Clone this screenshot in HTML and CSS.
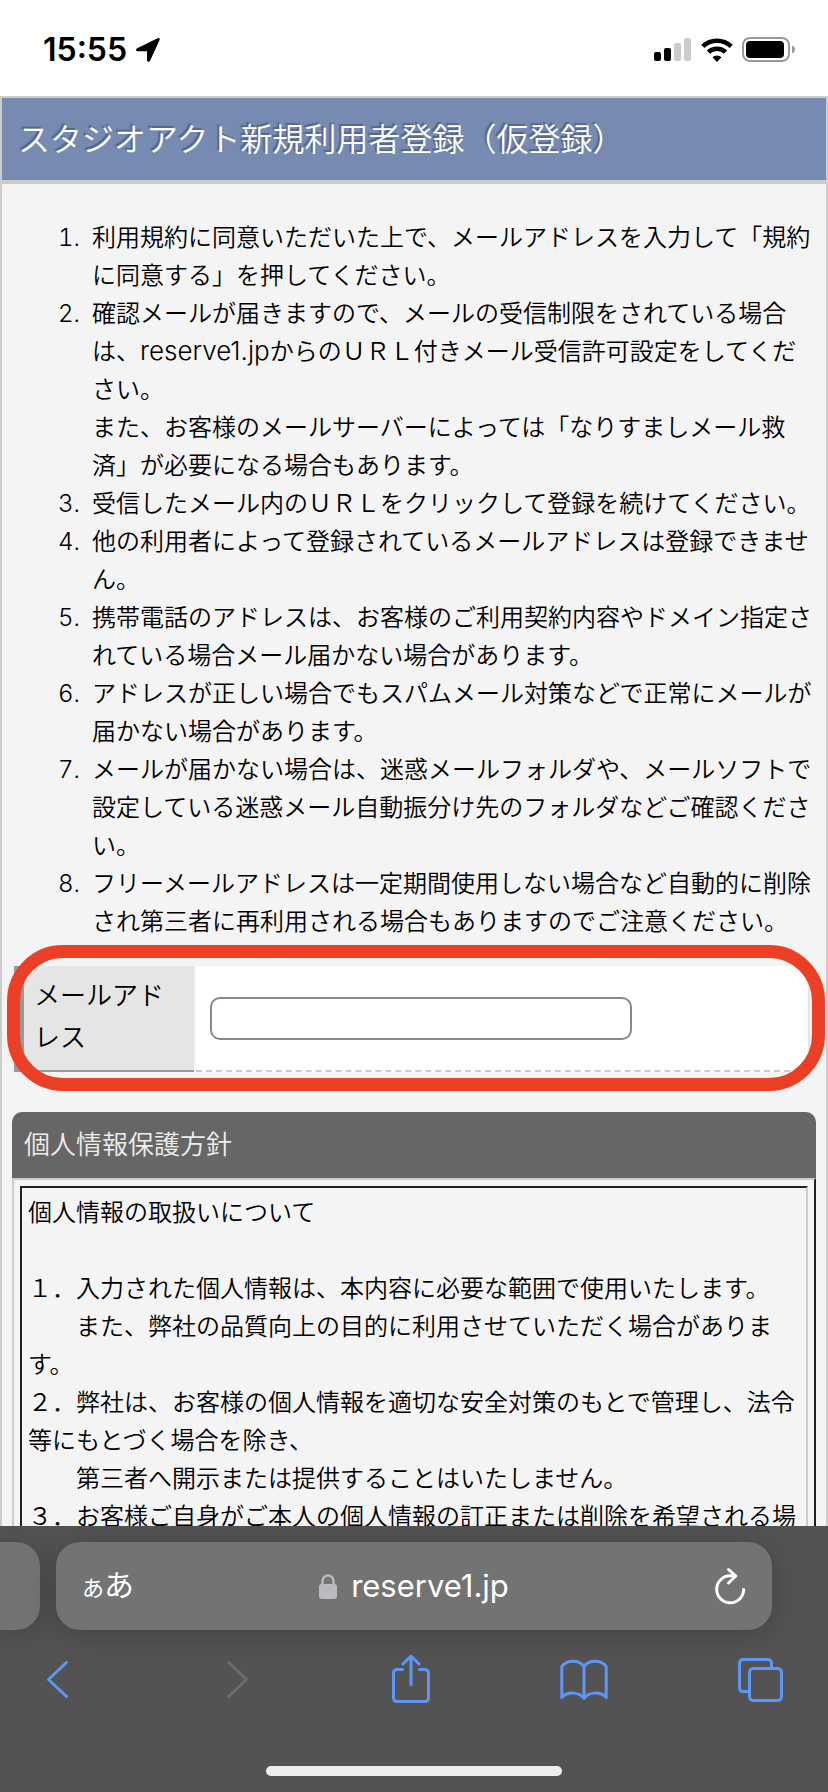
FILE: index.html
```html
<!DOCTYPE html>
<html lang="ja">
<head>
<meta charset="UTF-8" />
<meta name="viewport" content="width=device-width, initial-scale=1" />
<title>スタジオアクト新規利用者登録（仮登録）</title>
<link rel="stylesheet" href="styles.css">
</head>
<body>
<div class="status">
  <span class="time">15:55</span>
  <svg class="location" width="26" height="26" viewBox="0 0 26 26"><path d="M2.200 11.200 22.600 1.200c1.400-.7 2.600.4 2 1.800L15.200 23.600c-.9 1.900-3.200 1.400-3.200-.6V14.200H2.900C.8 14.200.3 12.100 2.200 11.200z"/></svg>
  <div class="status-icons">
    <svg width="38" height="24" viewBox="0 0 38 24">
      <rect x="0" y="14" width="7" height="9" rx="2"/>
      <rect x="10" y="10" width="7" height="13" rx="2"/>
      <g fill="#ccc"><rect x="20" y="5" width="7" height="18" rx="2"/><rect x="30" y="0" width="7" height="23" rx="2"/></g>
    </svg>
    <svg width="32" height="24" viewBox="0 0 32 24">
      <g fill="none" stroke="#000" stroke-width="4.600"><path d="M1.800 8.400a20.500 20.500 0 0 1 28.400 0"/><path d="M7.400 14.200a12.500 12.500 0 0 1 17.200 0"/></g>
      <path d="M16 24l-4.500-4.700a6.400 6.400 0 0 1 9 0z"/>
    </svg>
    <svg width="54" height="26" viewBox="0 0 54 26">
      <rect x="1" y="1" width="46" height="23" rx="7" fill="none" stroke="#999" stroke-width="2"/>
      <rect x="4" y="4" width="38" height="17" rx="4"/>
      <path d="M50 8.500c4 1.500 4 6.500 0 8z" fill="#999"/>
    </svg>
  </div>
</div>

<main class="page">
  <h1>スタジオアクト新規利用者登録（仮登録）</h1>

  <ol class="notes">
    <li>利用規約に同意いただいた上で、メールアドレスを入力して「規約に同意する」を押してください。</li>
    <li>確認メールが届きますので、メールの受信制限をされている場合は、<span class="domain">reserve1.jp</span>からのＵＲＬ付きメール受信許可設定をしてください。<br>また、お客様のメールサーバーによっては「なりすましメール救済」が必要になる場合もあります。</li>
    <li>受信したメール内のＵＲＬをクリックして登録を続けてください。</li>
    <li>他の利用者によって登録されているメールアドレスは登録できません。</li>
    <li>携帯電話のアドレスは、お客様のご利用契約内容やドメイン指定されている場合メール届かない場合があります。</li>
    <li>アドレスが正しい場合でもスパムメール対策などで正常にメールが届かない場合があります。</li>
    <li>メールが届かない場合は、迷惑メールフォルダや、メールソフトで設定している迷惑メール自動振分け先のフォルダなどご確認ください。</li>
    <li>フリーメールアドレスは一定期間使用しない場合など自動的に削除され第三者に再利用される場合もありますのでご注意ください。</li>
  </ol>

  <form class="mail">
    <label for="mail">メールアドレス</label>
    <div class="mail-value"><input type="email" id="mail" name="mail"></div>
    <div class="ring"></div>
  </form>

  <section class="policy">
    <h2>個人情報保護方針</h2>
    <div class="policy-frame">
      <div class="policy-text">個人情報の取扱いについて<br><br>１．入力された個人情報は、本内容に必要な範囲で使用いたします。<br>　　また、弊社の品質向上の目的に利用させていただく場合があります。<br>２．弊社は、お客様の個人情報を適切な安全対策のもとで管理し、法令等にもとづく場合を除き、<br>　　第三者へ開示または提供することはいたしません。<br>３．お客様ご自身がご本人の個人情報の訂正または削除を希望される場</div>
    </div>
  </section>
</main>

<footer class="browser">
  <div class="tabs">
    <div class="tab-prev"></div>
    <div class="tab">
      <button class="reader" aria-label="表示設定"><small>あ</small>あ</button>
      <a class="address" href="#">
        <svg width="18" height="25" viewBox="0 0 18 25"><rect x="0" y="10" width="18" height="15" rx="3" fill="#bbbac0"/><path d="M3.500 11V7a5.500 5.500 0 0 1 11 0v4" fill="none" stroke="#bbbac0" stroke-width="2.400"/></svg>
        reserve1.jp
      </a>
      <button class="reload" aria-label="再読み込み">
        <svg class="line" width="32" height="38" viewBox="0 0 32 38"><path d="M29.700 22.500A13.500 13.500 0 1 1 16.200 8.800h5"/><path d="M14.500 2.500l7.300 6.500-7.300 7"/></svg>
      </button>
    </div>
  </div>
  <nav>
    <button aria-label="戻る"><svg class="line" width="48" height="50" viewBox="0 0 48 50"><path d="M33.500 8.500 15.500 25.500l18 17"/></svg></button>
    <button aria-label="進む" disabled><svg class="line" width="48" height="50" viewBox="0 0 48 50"><path d="M19.500 8.500l18 17-18 17"/></svg></button>
    <button aria-label="共有"><svg class="line" width="48" height="50" viewBox="0 0 48 50"><path d="M17.500 15.500h-5q-4 0-4 4v24q0 4 4 4h27q4 0 4-4v-24q0-4-4-4h-5"/><path d="M26 30.500V2.500M18 10l8-8 8 8"/></svg></button>
    <button aria-label="ブックマーク"><svg class="line" width="48" height="50" viewBox="0 0 48 50"><path d="M24 12.500C19 5.500 7 5.500 1.800 12.500V43.500C7 37.500 19 37.500 24 44.500 29 37.500 41 37.500 46.200 43.500V12.500C41 5.500 29 5.500 24 12.500zV44"/></svg></button>
    <button aria-label="タブ一覧"><svg class="line" width="48" height="50" viewBox="0 0 48 50"><rect x="13.500" y="14.500" width="32" height="32" rx="4"/><path d="M13 37.500H7.500q-4 0-4-4v-24q0-4 4-4h24q4 0 4 4v5"/></svg></button>
  </nav>
  <div class="home-bar"></div>
</footer>
</body>
</html>
```

FILE: styles.css
```css
* { box-sizing:border-box; }
body { margin:0; height:100vh; display:flex; flex-direction:column; background:#fff; color:#000; font-family:Inter, "Noto Sans CJK JP", sans-serif; font-size:24px; line-height:38px; font-weight:350; }
button { padding:0; border:none; background:none; color:inherit; font:inherit; cursor:pointer; }
svg { display:block; }

.status { flex:none; height:96px; padding:4px 32px 0 43px; display:flex; align-items:center; }
.time { font-weight:600; font-size:32px; }
.location { margin-left:8px; }
.status-icons { margin-left:auto; display:flex; align-items:center; gap:9px; }

.page { flex:1; min-height:0; overflow:hidden; background:#f4f4f4; border:2px solid #ccc; border-bottom:none; }
h1 { margin:0; height:86px; padding:0 16px; border-bottom:4px solid #ccc; background:#778ab2; color:#fff; font-size:32px; line-height:84px; font-weight:350; text-shadow:-2px -2px 1px #55648a; }
.notes { margin:35px 14px 25px 90px; padding:0; }
.notes li::marker { content:counter(list-item) ".\2002"; }
.domain { font-size:26px; line-height:1; }

.mail { position:relative; margin:0 16px 0 12px; display:flex; gap:2px; }
.mail label { width:180px; padding:9px 12px 11px 10px; border-left:10px solid #999; border-bottom:2px solid #999; background:#e5e5e5; font-size:26px; line-height:42px; }
.mail-value { flex:1; padding:0 14px; display:flex; align-items:center; background:#fff; border-right:2px solid #e5e5e5; border-bottom:2px dashed #ccc; }
.mail input { width:422px; height:43px; padding:0 10px; border:2px solid #888; border-radius:10px; background:#fff; font:inherit; }
/* red marker around the address row */
.ring { position:absolute; inset:-21px -15px -19px -7px; border:13px solid #eb4025; border-radius:56px; pointer-events:none; }

.policy { margin:40px 10px 0; }
h2 { margin:0; padding:0 12px; background:#666; border-radius:10px 10px 0 0; color:#eee; font-size:26px; line-height:66px; font-weight:350; }
.policy-frame { padding:6px; border:2px solid #ccc; border-right-color:#222; }
.policy-text { padding:6px; border:2px solid #222; border-right-color:#ccc; }

.browser { flex:none; height:266px; padding-top:16px; background:#535353; color:#fff; display:flex; flex-direction:column; }
.tabs { display:flex; gap:16px; padding-right:56px; }
.tab-prev { width:40px; border-radius:0 24px 24px 0; background:#737373; box-shadow:0 4px 30px #0003; }
.tab { flex:1; height:88px; padding:0 26px; display:grid; grid-template-columns:1fr auto 1fr; align-items:center; border-radius:24px; background:#737373; box-shadow:0 4px 30px #0003; }
.reader { justify-self:start; font-size:30px; font-weight:400; }
.reader small { font-size:22px; }
.reload { justify-self:end; }
.address { display:flex; align-items:center; gap:14px; color:#fff; font-size:31px; font-weight:400; text-decoration:none; }
.line { fill:none; stroke:currentColor; stroke-width:3; stroke-linecap:round; stroke-linejoin:round; }
nav { margin-top:24px; padding:0 44px 0 33px; display:flex; justify-content:space-between; color:#5e96f8; }
nav button:disabled { color:#6c6c6c; }
.home-bar { width:296px; height:10px; margin:auto auto 16px; border-radius:5px; background:#eee; }
```
